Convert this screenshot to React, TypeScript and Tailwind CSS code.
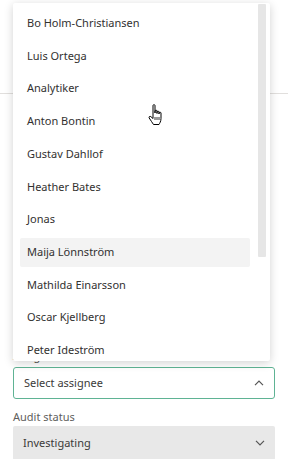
import React from "react";

const names = [
  "Bo Holm-Christiansen",
  "Luis Ortega",
  "Analytiker",
  "Anton Bontin",
  "Gustav Dahllof",
  "Heather Bates",
  "Jonas",
  "Maija Lönnström",
  "Mathilda Einarsson",
  "Oscar Kjellberg",
  "Peter Ideström",
];

function Chevron({ up }: { up?: boolean }) {
  return (
    <svg width="10" height="6" viewBox="0 0 10 6" fill="none" className="text-[#555]">
      {up ? (
        <path d="M1 5.2 L5 1.2 L9 5.2" stroke="currentColor" strokeWidth="1.2" />
      ) : (
        <path d="M1 0.8 L5 4.8 L9 0.8" stroke="currentColor" strokeWidth="1.2" />
      )}
    </svg>
  );
}

export default function App() {
  return (
    <div
      className="relative w-[288px] h-[459px] overflow-hidden bg-white text-[11px] text-[#323130]"
      style={{ fontFamily: '"Noto Sans", "Open Sans", sans-serif' }}
    >
      {/* background form */}
      <div className="flex flex-col">
        <div className="flex justify-between px-[14px] -mt-[13px] h-[16px] leading-[16px] text-[#605e5c]">
          <span>Due status</span>
          <span className="mr-[18px]">11/16/2023</span>
        </div>
        <div className="h-[90px]" />
        <div className="h-px bg-[#e1dfdd]" />
        <div className="h-[251px]" />
        <div className="px-[13px] flex flex-col">
          <div className="h-[22px] text-[#605e5c] leading-[22px]">Assignee</div>
          <div className="h-[32px] border border-[#5fb394] rounded-[3px] flex items-center justify-between pl-[10px] pr-[10px] text-[#3b3a39]">
            <span>Select assignee</span>
            <Chevron up />
          </div>
          <div className="h-[27px] flex items-end pb-[1px] text-[#605e5c]">Audit status</div>
          <div className="h-[34px] bg-[#e8e8e8] rounded-[2px] flex items-center justify-between pl-[10px] pr-[10px] text-[#3b3a39]">
            <span>Investigating</span>
            <Chevron />
          </div>
        </div>
      </div>

      {/* dropdown overlay */}
      <div className="absolute left-[13px] top-[3px] w-[257px] h-[358px] bg-white rounded-[2px] shadow-[0_2px_10px_rgba(0,0,0,0.18)] overflow-hidden flex">
        <div className="flex-1 flex flex-col pt-[4px] pl-[7px] pr-[8px]">
          {names.map((n, i) => (
            <div key={n} className="h-[32.7px] shrink-0 flex items-center">
              <div
                className={`w-full h-[29px] flex items-center pl-[7px] rounded-[2px] ${
                  i === 7 ? "bg-[#f3f3f3]" : ""
                }`}
              >
                {n}
              </div>
            </div>
          ))}
        </div>
        <div className="w-[12px] pr-[3px] pt-[1px] flex flex-col">
          <div className="w-[8px] h-[253px] bg-[#e6e6e6] rounded-[1px]" />
        </div>
      </div>

      {/* hand cursor */}
      <svg
        className="absolute left-[148px] top-[103px]"
        width="18"
        height="24"
        viewBox="0 0 18 24"
      >
        <path
          d="M5 2.5 C5 1.4 7 1.4 7 2.5 L7 10 L7 8 C7 6.9 9 6.9 9 8 L9 10.5 L9 9 C9 7.9 11 7.9 11 9 L11 11 L11 10 C11 8.9 13 8.9 13 10 L13 15.5 C13 18.5 11.5 20.5 11 21.5 L5.5 21.5 C4.5 19.5 2.5 17.5 1.2 15 C0.6 13.8 1.8 12.8 2.8 13.6 L5 15.5 Z"
          fill="white"
          stroke="black"
          strokeWidth="1"
          strokeLinejoin="round"
        />
        <path d="M7 14 L7 17 M9 14 L9 17 M11 14 L11 17" stroke="black" strokeWidth="0.8" />
      </svg>
    </div>
  );
}
